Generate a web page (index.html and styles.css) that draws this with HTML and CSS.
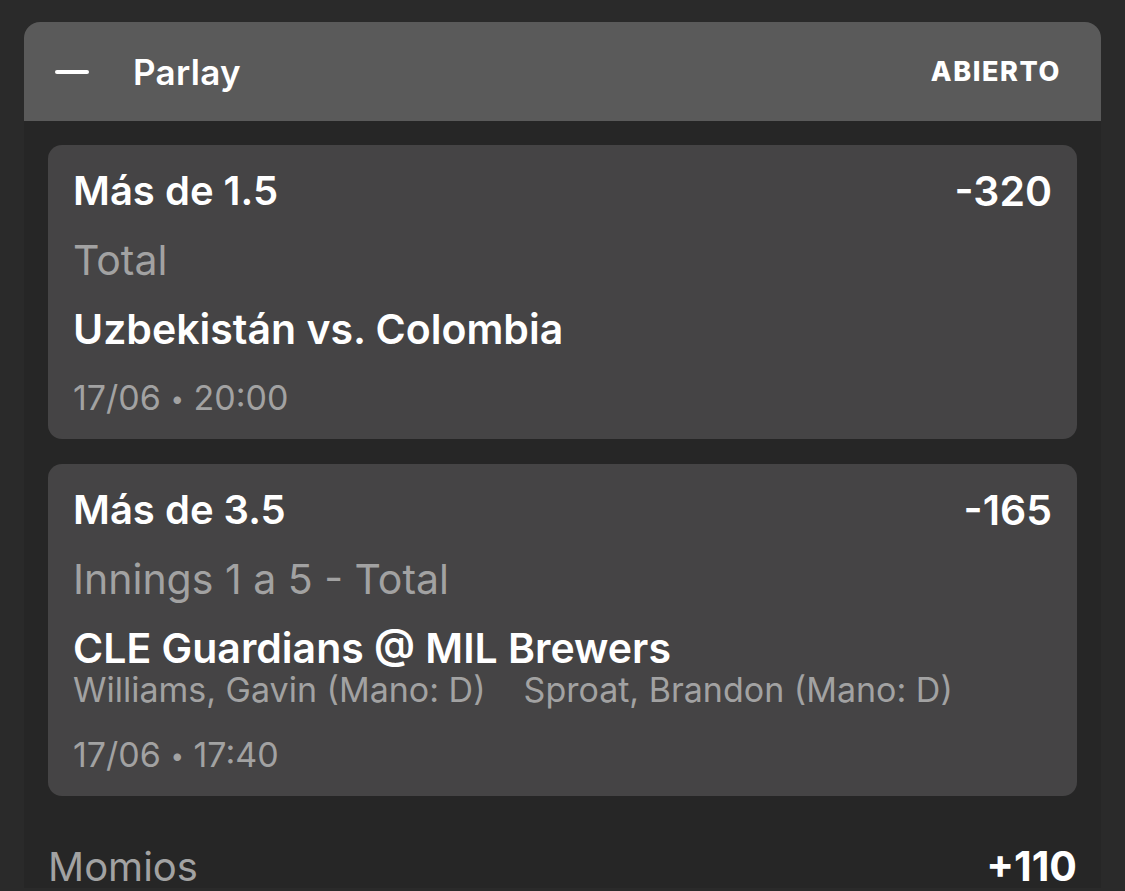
FILE: index.html
```html
<!DOCTYPE html>
<html lang="es">
<head>
<meta charset="utf-8">
<title>Parlay</title>
<link rel="stylesheet" href="styles.css">
</head>
<body>
<section class="panel">
  <header class="panel-head">
    <div class="head-left">
      <span class="collapse-icon" aria-hidden="true"></span>
      <span class="panel-title">Parlay</span>
    </div>
    <span class="status">ABIERTO</span>
  </header>
  <div class="panel-body">
    <article class="leg">
      <div class="leg-top">
        <span class="pick">Más de 1.5</span>
        <span class="odds">-320</span>
      </div>
      <div class="market">Total</div>
      <div class="event">Uzbekistán vs. Colombia</div>
      <div class="when">17/06 <span class="dot">•</span> 20:00</div>
    </article>
    <article class="leg">
      <div class="leg-top">
        <span class="pick">Más de 3.5</span>
        <span class="odds">-165</span>
      </div>
      <div class="market">Innings 1 a 5 - Total</div>
      <div class="event event-tight">CLE Guardians @ MIL Brewers</div>
      <div class="pitchers">
        <span>Williams, Gavin (Mano: D)</span>
        <span>Sproat, Brandon (Mano: D)</span>
      </div>
      <div class="when when-after-pitchers">17/06 <span class="dot">•</span> 17:40</div>
    </article>
    <div class="summary">
      <span class="summary-label">Momios</span>
      <span class="summary-value">+110</span>
    </div>
  </div>
</section>
</body>
</html>
```

FILE: styles.css
```css
html, body {
  margin: 0;
  padding: 0;
}

body {
  background: #2a2a2a;
  font-family: Inter, "Noto Sans", "Liberation Sans", sans-serif;
  color: #ffffff;
  height: 891px;
  overflow: hidden;
}

.panel {
  margin: 22px 24px 0 24px;
  background: #262626;
  border-radius: 16px 16px 0 0;
}

.panel-head {
  height: 99px;
  background: #5a5a5a;
  border-radius: 16px 16px 0 0;
  display: flex;
  align-items: center;
  justify-content: space-between;
  padding: 0 40px 0 31px;
}

.head-left {
  display: flex;
  align-items: center;
  gap: 44px;
}

.collapse-icon {
  display: block;
  width: 34px;
  height: 4px;
  border-radius: 2px;
  background: #ffffff;
}

.panel-title {
  font-size: 35px;
  font-weight: 600;
  letter-spacing: 0.3px;
}

.status {
  font-size: 27px;
  font-weight: 800;
  letter-spacing: 1.6px;
}

.panel-body {
  padding: 24px 24px 0 24px;
  display: flex;
  flex-direction: column;
  gap: 25px;
}

.leg {
  background: #454445;
  border-radius: 14px;
  padding: 24px 25px 19px 25px;
  display: flex;
  flex-direction: column;
  gap: 25px;
}

.leg-top {
  display: flex;
  justify-content: space-between;
  align-items: center;
  height: 44px;
}

.pick {
  font-size: 40px;
  font-weight: 600;
  line-height: 44px;
}

.odds {
  font-size: 41px;
  font-weight: 600;
  line-height: 44px;
}

.market {
  font-size: 41px;
  font-weight: 400;
  line-height: 44px;
  color: #a2a2a2;
}

.event {
  font-size: 41px;
  font-weight: 600;
  line-height: 44px;
}

.event-tight {
  margin-bottom: -25px;
}

.pitchers {
  display: flex;
  gap: 38px;
  font-size: 34px;
  line-height: 40px;
  color: #a2a2a2;
}

.when {
  height: 44px;
  font-size: 34px;
  line-height: 44px;
  color: #a2a2a2;
}

.dot {
  font-size: 24px;
  line-height: 0;
  vertical-align: 3px;
}

.when-after-pitchers {
  margin-top: -2px;
}

.summary {
  display: flex;
  justify-content: space-between;
  align-items: center;
  height: 44px;
  margin-top: 23px;
}

.summary-label {
  font-size: 40px;
  color: #a2a2a2;
}

.summary-value {
  font-size: 41px;
  font-weight: 700;
}
```
